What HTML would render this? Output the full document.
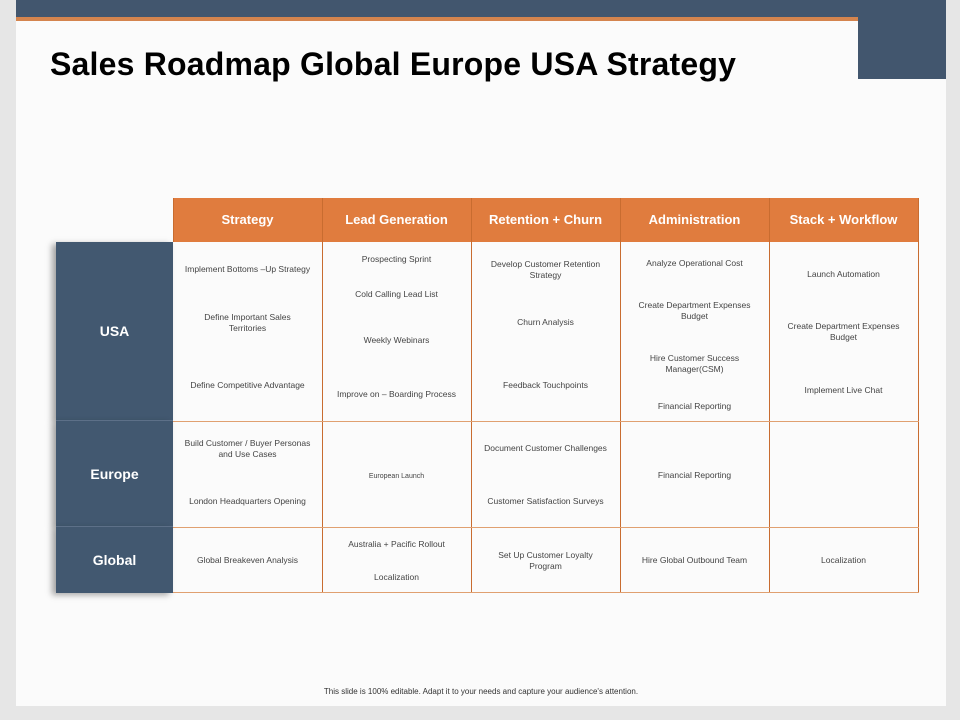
<!DOCTYPE html><html><head><style>
body{margin:0;width:960px;height:720px;background:#e6e6e6;position:relative;overflow:hidden;font-family:"Liberation Sans",sans-serif}
.slide{position:absolute;left:16px;top:0;width:930px;height:706px;background:#fbfbfb}
.a{position:absolute}
.t{position:absolute;font-size:8.5px;color:#444;text-align:center;line-height:11px}
.h{position:absolute;top:198px;height:44px;line-height:44px;color:#fff;font-weight:bold;font-size:13px;text-align:center;background:#e07c3e}
.vl{position:absolute;width:1px;background:#e0b58f}
.hl{position:absolute;height:1px;background:#e0a070}
.lab{position:absolute;left:56px;width:117px;background:#425870;color:#fff;font-weight:bold;font-size:14px;text-align:center;box-shadow:-4px 2px 6px rgba(0,0,0,.35)}
</style></head><body>
<div class="slide"></div>
<div class="a" style="left:16px;top:0;width:930px;height:17px;background:#42566e"></div>
<div class="a" style="left:16px;top:17px;width:842px;height:4px;background:#d4844e"></div>
<div class="a" style="left:858px;top:0;width:88px;height:79px;background:#42566e"></div>
<div class="a" style="left:50px;top:46px;font-size:32px;font-weight:bold;color:#000;letter-spacing:0.2px">Sales Roadmap Global Europe USA Strategy</div>

<div class="h" style="left:173px;width:149px">Strategy</div>
<div class="h" style="left:322px;width:149px">Lead Generation</div>
<div class="h" style="left:471px;width:149px">Retention + Churn</div>
<div class="h" style="left:620px;width:149px">Administration</div>
<div class="h" style="left:769px;width:149px">Stack + Workflow</div>
<div class="vl" style="left:322px;top:198px;height:395px;background:#c86c30"></div>
<div class="vl" style="left:471px;top:198px;height:395px;background:#c86c30"></div>
<div class="vl" style="left:620px;top:198px;height:395px;background:#c86c30"></div>
<div class="vl" style="left:769px;top:198px;height:395px;background:#c86c30"></div>
<div class="vl" style="left:918px;top:198px;height:395px;background:#c86c30"></div>
<div class="vl" style="left:173px;top:198px;height:44px;background:#c86c30"></div>
<div class="hl" style="left:173px;top:421px;width:746px"></div>
<div class="hl" style="left:173px;top:527px;width:746px"></div>
<div class="hl" style="left:173px;top:592px;width:746px"></div>

<div class="lab" style="top:242px;height:179px;line-height:179px">USA</div>
<div class="lab" style="top:421px;height:106px;line-height:106px">Europe</div>
<div class="lab" style="top:527px;height:66px;line-height:66px">Global</div>
<div class="a" style="left:56px;top:420px;width:117px;height:1px;background:#5d7088"></div>
<div class="a" style="left:56px;top:526px;width:117px;height:1px;background:#5d7088"></div>

<div class="t" style="left:173px;width:149px;top:264px">Implement Bottoms –Up Strategy</div>
<div class="t" style="left:173px;width:149px;top:312px">Define Important Sales<br>Territories</div>
<div class="t" style="left:173px;width:149px;top:380px">Define Competitive Advantage</div>
<div class="t" style="left:322px;width:149px;top:254px">Prospecting Sprint</div>
<div class="t" style="left:322px;width:149px;top:289px">Cold Calling Lead List</div>
<div class="t" style="left:322px;width:149px;top:335px">Weekly Webinars</div>
<div class="t" style="left:322px;width:149px;top:389px">Improve on – Boarding Process</div>
<div class="t" style="left:471px;width:149px;top:259px">Develop Customer Retention<br>Strategy</div>
<div class="t" style="left:471px;width:149px;top:317px">Churn Analysis</div>
<div class="t" style="left:471px;width:149px;top:380px">Feedback Touchpoints</div>
<div class="t" style="left:620px;width:149px;top:258px">Analyze Operational Cost</div>
<div class="t" style="left:620px;width:149px;top:300px">Create Department Expenses<br>Budget</div>
<div class="t" style="left:620px;width:149px;top:353px">Hire Customer Success<br>Manager(CSM)</div>
<div class="t" style="left:620px;width:149px;top:401px">Financial Reporting</div>
<div class="t" style="left:769px;width:149px;top:269px">Launch Automation</div>
<div class="t" style="left:769px;width:149px;top:321px">Create Department Expenses<br>Budget</div>
<div class="t" style="left:769px;width:149px;top:385px">Implement Live Chat</div>

<div class="t" style="left:173px;width:149px;top:438px">Build Customer / Buyer Personas<br>and Use Cases</div>
<div class="t" style="left:173px;width:149px;top:496px">London Headquarters Opening</div>
<div class="t" style="left:322px;width:149px;top:471px;font-size:7px">European Launch</div>
<div class="t" style="left:471px;width:149px;top:443px">Document Customer Challenges</div>
<div class="t" style="left:471px;width:149px;top:496px">Customer Satisfaction Surveys</div>
<div class="t" style="left:620px;width:149px;top:470px">Financial Reporting</div>

<div class="t" style="left:173px;width:149px;top:555px">Global Breakeven Analysis</div>
<div class="t" style="left:322px;width:149px;top:539px">Australia + Pacific Rollout</div>
<div class="t" style="left:322px;width:149px;top:572px">Localization</div>
<div class="t" style="left:471px;width:149px;top:550px">Set Up Customer Loyalty<br>Program</div>
<div class="t" style="left:620px;width:149px;top:555px">Hire Global Outbound Team</div>
<div class="t" style="left:769px;width:149px;top:555px">Localization</div>

<div class="t" style="left:16px;width:930px;top:686px;font-size:8px;color:#333">This slide is 100% editable. Adapt it to your needs and capture your audience's attention.</div>
</body></html>
